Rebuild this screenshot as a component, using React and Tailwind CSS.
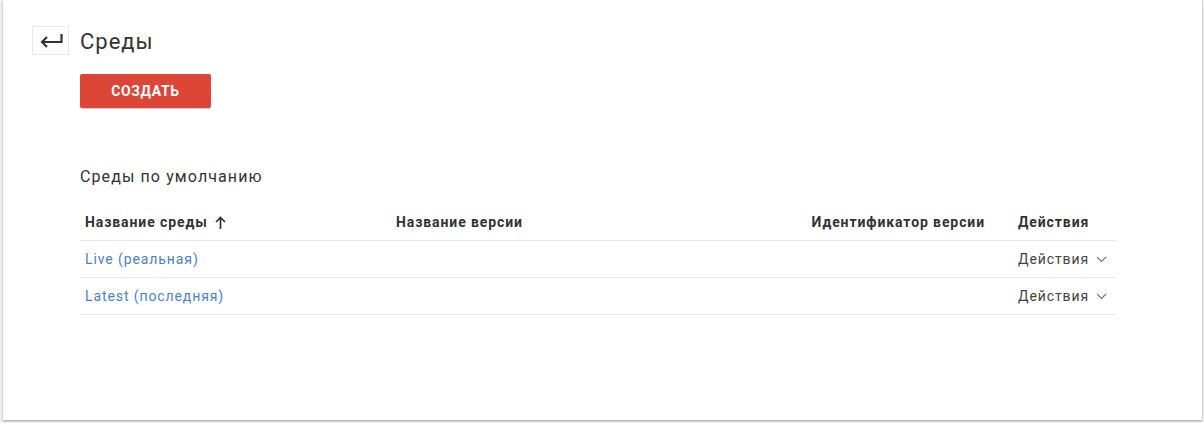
function BackIcon() {
  return (
    <svg width="24" height="16" viewBox="0 0 24 16" fill="none" stroke="#333" strokeWidth="2.2">
      <path d="M22.5 1v8H3" />
      <path d="M8 4l-5 5 5 5" />
    </svg>
  )
}

function Chevron() {
  return (
    <svg width="11" height="7" viewBox="0 0 11 7" fill="none" stroke="#777" strokeWidth="1.1">
      <path d="M1 1l4.5 4.5L10 1" />
    </svg>
  )
}

const rows = ['Live (реальная)', 'Latest (последняя)']

export default function App() {
  return (
    <div className="h-[423px] bg-[#f0f0f0] pl-[3px] pr-[2px] pb-[3px]" style={{ fontFamily: 'Roboto, "Noto Sans", sans-serif' }}>
      <div className="h-full pt-[26px] bg-white shadow-[0_1px_2px_rgba(0,0,0,0.35)] text-[#333]">
        <div className="flex items-center h-[29px] pl-[29px]">
          <button className="w-[37px] h-[29px] border border-[#e8e8e8] flex items-center justify-center">
            <BackIcon />
          </button>
          <h1 className="ml-[11px] text-[22px] leading-[31px] pt-[2px] tracking-[1px] text-[#333]">Среды</h1>
        </div>
        <div className="pl-[77px] pt-[19px]">
          <button className="w-[131px] h-[34px] bg-[#dd4536] text-white text-[14px] font-bold rounded-[2px] shadow-[0_1px_1px_rgba(0,0,0,0.2)] tracking-[0.6px]">
            СОЗДАТЬ
          </button>
        </div>
        <div className="pl-[77px] pr-[86px] pt-[59px]">
          <div className="text-[16px] leading-[20px] tracking-[1.1px] text-[#333]">Среды по умолчанию</div>
          <div className="mt-[17px] text-[14px] tracking-[0.9px]">
            <div className="grid grid-cols-[311px_309px_313px_1fr] h-[37px] items-center border-b border-[#e8e8e8] font-bold text-[#333]">
              <div className="pl-[5px] flex items-center gap-[7px]">
                Название среды
                <svg width="11" height="13" viewBox="0 0 11 13" fill="none" stroke="#333" strokeWidth="1.7">
                  <path d="M5.5 13V1.8M1 6l4.5-4.5L10 6" />
                </svg>
              </div>
              <div className="pl-[5px]">Название версии</div>
              <div className="pr-[28px] text-right">Идентификатор версии</div>
              <div className="pl-[5px]">Действия</div>
            </div>
            {rows.map((r) => (
              <div key={r} className="grid grid-cols-[311px_309px_313px_1fr] h-[37px] items-center border-b border-[#e8e8e8]">
                <div className="pl-[5px] text-[#4a7fd4]">{r}</div>
                <div />
                <div />
                <div className="pl-[5px] flex items-center gap-[7px] text-[#444]">
                  Действия
                  <Chevron />
                </div>
              </div>
            ))}
          </div>
        </div>
      </div>
    </div>
  )
}
